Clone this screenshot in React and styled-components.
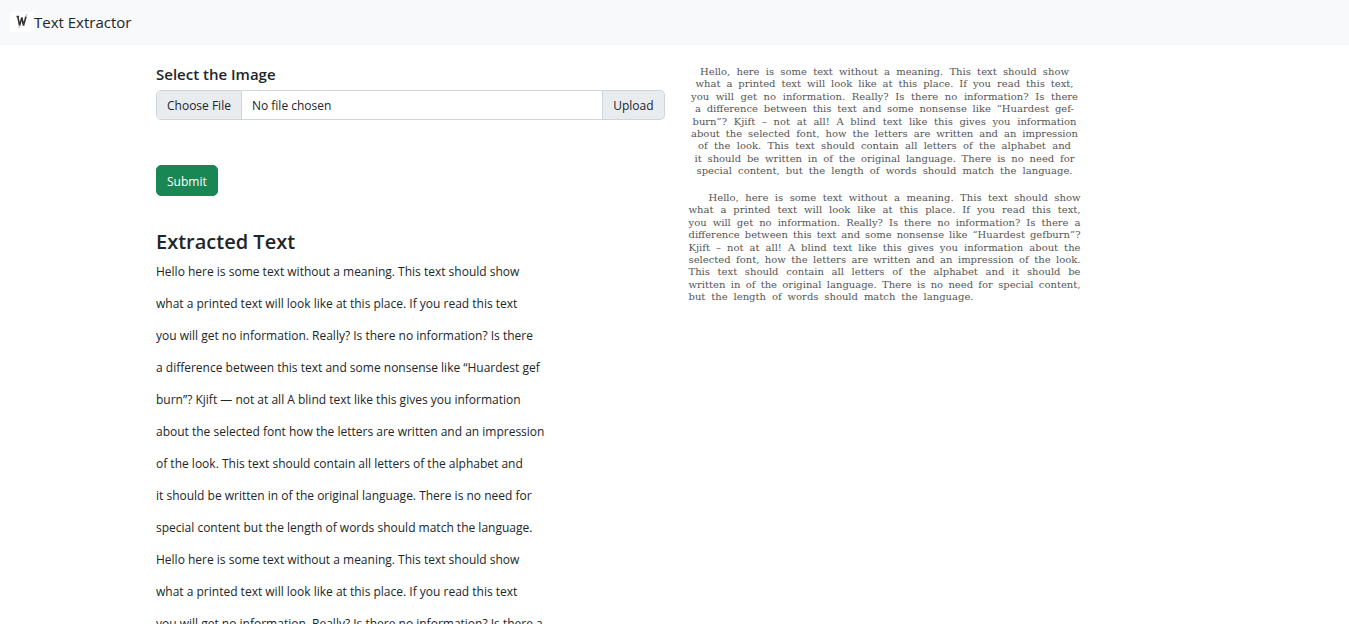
import React from "react";
import styled, { createGlobalStyle } from "styled-components";

const GlobalStyle = createGlobalStyle`
  *, *::before, *::after { box-sizing: border-box; }
  html { scrollbar-width: none; }
  body {
    margin: 0;
    background: #fff;
    color: #212529;
    font-family: "Segoe UI", "Open Sans", "Noto Sans", sans-serif;
    font-size: 12px;
    line-height: 20px;
  }
`;

const Navbar = styled.nav`
  display: flex;
  background: #f8f9fa;
  padding: 7px 10px 9px;
`;

const Brand = styled.a`
  display: flex;
  align-items: center;
  height: 29px;
  color: #212529;
  font-size: 15px;
  text-decoration: none;
`;

const Logo = styled.svg`
  width: 24px;
  height: 20px;
`;

const Container = styled.main`
  display: grid;
  grid-template-columns: 1fr 1fr;
  gap: 20px;
  max-width: 1057px;
  margin: 0 auto;
  padding: 19px 10px;
`;

const Form = styled.form`
  display: flex;
  flex-direction: column;
  align-items: flex-start;
`;

const FieldTitle = styled.label`
  font-size: 15px;
  font-weight: 600;
  margin-bottom: 6px;
`;

const InputGroup = styled.div`
  display: flex;
  width: 100%;
  height: 30px;
`;

const FileInput = styled.input`
  flex: 1;
  min-width: 0;
  height: 30px;
  padding: 0;
  border: 1px solid #ced4da;
  border-radius: 5px 0 0 5px;
  color: #212529;
  font: inherit;
  line-height: 29px;

  &::file-selector-button {
    height: 28px;
    margin: 0 10px 0 0;
    padding: 0 10px;
    border: 0;
    border-right: 1px solid #ced4da;
    background: #e9ecef;
    color: #212529;
    font: inherit;
  }
`;

const UploadLabel = styled.label`
  padding: 0 10px;
  border: 1px solid #ced4da;
  border-left: 0;
  border-radius: 0 5px 5px 0;
  background: #e9ecef;
  line-height: 29px;
`;

const SubmitButton = styled.button`
  height: 31px;
  margin-top: 45px;
  padding: 2px 10px 0;
  border: 1px solid #198754;
  border-radius: 5px;
  background: #198754;
  color: #fff;
  font: inherit;
`;

const Heading = styled.h3`
  margin: 32px 0 0;
  font-size: 20px;
  font-weight: 600;
  line-height: 28px;
`;

const Extracted = styled.p`
  margin: 0;
  line-height: 32px;
  white-space: pre-line;
`;

const Scan = styled.figure`
  display: flex;
  flex-direction: column;
  align-items: center;
  gap: 15px;
  width: 392px;
  max-width: 100%;
  margin: 0 0 0 4px;
  padding-top: 2px;
  color: #555;
  font-family: "DejaVu Serif", serif;
  font-size: 10px;
  line-height: 12px;
`;

const ScanParagraph = styled.div`
  display: flex;
  flex-direction: column;
  align-items: ${(p) => (p.$centered ? "center" : "flex-start")};
  justify-content: space-between;
  width: 100%;
  height: 111px;
`;

const ScanLine = styled.span`
  width: ${(p) => p.$width}px;
  padding-left: ${(p) => (p.$indent ? 20 : 0)}px;
  text-align: justify;
  text-align-last: justify;
  white-space: nowrap;
`;

const extractedText = `Hello here is some text without a meaning. This text should show
what a printed text will look like at this place. If you read this text
you will get no information. Really? Is there no information? Is there
a difference between this text and some nonsense like “Huardest gef
burn”? Kjift — not at all A blind text like this gives you information
about the selected font how the letters are written and an impression
of the look. This text should contain all letters of the alphabet and
it should be written in of the original language. There is no need for
special content but the length of words should match the language.
Hello here is some text without a meaning. This text should show
what a printed text will look like at this place. If you read this text
you will get no information. Really? Is there no information? Is there a`;

const centeredLines = [
  [369, "Hello, here is some text without a meaning. This text should show"],
  [378, "what a printed text will look like at this place. If you read this text,"],
  [387, "you will get no information. Really? Is there no information? Is there"],
  [379, "a difference between this text and some nonsense like “Huardest gef-"],
  [384, "burn”? Kjift – not at all! A blind text like this gives you information"],
  [387, "about the selected font, how the letters are written and an impression"],
  [373, "of the look. This text should contain all letters of the alphabet and"],
  [380, "it should be written in of the original language. There is no need for"],
  [376, "special content, but the length of words should match the language."],
];

const justifiedLines = [
  [392, "Hello, here is some text without a meaning. This text should show"],
  [392, "what a printed text will look like at this place. If you read this text,"],
  [392, "you will get no information. Really? Is there no information? Is there a"],
  [392, "difference between this text and some nonsense like “Huardest gefburn”?"],
  [392, "Kjift – not at all! A blind text like this gives you information about the"],
  [392, "selected font, how the letters are written and an impression of the look."],
  [392, "This text should contain all letters of the alphabet and it should be"],
  [392, "written in of the original language. There is no need for special content,"],
  [285, "but the length of words should match the language."],
];

export default function App() {
  return (
    <>
      <GlobalStyle />
      <Navbar>
        <Brand href="#">
          <Logo viewBox="0 0 24 20" aria-hidden="true">
            <rect width="24" height="20" fill="#fff" />
            <path d="M6.5 4.5h2.5M7.8 4.5l1.8 9 2.3-8 1.6 8L16 4.5" fill="none" stroke="#333" strokeWidth="1.6" />
            <path d="M15 5l2-3M9.4 13l-.4 3" fill="none" stroke="#999" strokeWidth="0.8" />
          </Logo>
          Text Extractor
        </Brand>
      </Navbar>
      <Container>
        <section>
          <Form onSubmit={(e) => e.preventDefault()}>
            <FieldTitle htmlFor="image">Select the Image</FieldTitle>
            <InputGroup>
              <FileInput type="file" id="image" accept="image/*" />
              <UploadLabel htmlFor="image">Upload</UploadLabel>
            </InputGroup>
            <SubmitButton type="submit">Submit</SubmitButton>
          </Form>
          <Heading>Extracted Text</Heading>
          <Extracted>{extractedText}</Extracted>
        </section>
        <Scan>
          <ScanParagraph $centered>
            {centeredLines.map(([width, text]) => (
              <ScanLine key={text} $width={width}>{text}</ScanLine>
            ))}
          </ScanParagraph>
          <ScanParagraph>
            {justifiedLines.map(([width, text], i) => (
              <ScanLine key={text} $width={width} $indent={i === 0}>{text}</ScanLine>
            ))}
          </ScanParagraph>
        </Scan>
      </Container>
    </>
  );
}
